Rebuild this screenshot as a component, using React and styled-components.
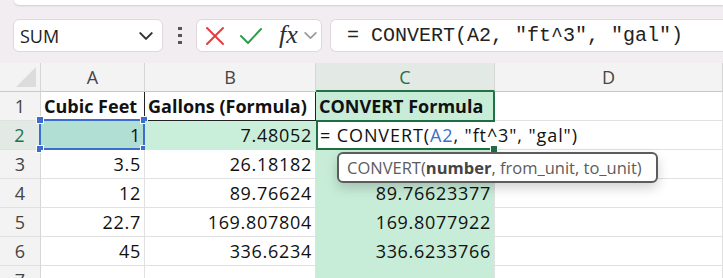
import React from "react";
import styled, { createGlobalStyle, css } from "styled-components";

const Global = createGlobalStyle`
  html, body { margin: 0; padding: 0; background: #f1edf0; }
  body { font-family: "Open Sans", "Noto Sans", sans-serif; }
`;

const Page = styled.div`
  position: relative;
  width: 723px;
  height: 278px;
  overflow: hidden;
  background: #f1edf0;
`;

const TopStrip = styled.div`
  height: 5px;
  margin-left: 14px;
  background: #ffffff;
  border-bottom-left-radius: 8px;
  box-shadow: 0 1px 2px rgba(0, 0, 0, 0.14);
`;

const FormulaBar = styled.div`
  display: flex;
  align-items: stretch;
  height: 33px;
  margin-top: 14px;
  padding-left: 13px;
`;

const NameBox = styled.div`
  width: 150px;
  box-sizing: border-box;
  display: flex;
  align-items: center;
  justify-content: space-between;
  padding: 0 8px 0 6px;
  background: #fff;
  border: 1px solid #dcd8dc;
  border-radius: 6px;
  font-size: 18px;
  color: #222;
`;

const Dots = styled.div`
  width: 4px;
  margin: 0 14px 0 15px;
  display: flex;
  flex-direction: column;
  justify-content: center;
  gap: 4px;
  span {
    display: block;
    width: 4px;
    height: 3px;
    background: #555;
  }
`;

const FxBox = styled.div`
  width: 126px;
  box-sizing: border-box;
  display: flex;
  align-items: center;
  padding-left: 8px;
  background: #fff;
  border: 1px solid #dcd8dc;
  border-radius: 6px;
`;

const Fx = styled.span`
  font-family: "Liberation Serif", "DejaVu Serif", serif;
  font-style: italic;
  font-size: 26px;
  color: #2f2f2f;
  margin: 0 5px 0 16px;
  line-height: 1;
  position: relative;
  top: -1px;
`;

const FormulaInput = styled.div`
  flex: 1;
  margin-left: 8px;
  box-sizing: border-box;
  display: flex;
  align-items: center;
  padding-left: 16px;
  background: #fff;
  border: 1px solid #dcd8dc;
  border-right: none;
  border-radius: 6px 0 0 6px;
  font-family: "Liberation Mono", "DejaVu Sans Mono", monospace;
  font-size: 20px;
  color: #222;
  white-space: nowrap;
`;

const Sheet = styled.div`
  margin-top: 11px;
  display: grid;
  grid-template-columns: 41px 104px 171px 179px 1fr;
  grid-auto-rows: 29px;
  background: #fff;
  font-size: 18px;
  color: #111;
`;

const cellBase = css`
  box-sizing: border-box;
  display: flex;
  align-items: center;
  white-space: nowrap;
  border-right: 1px solid #e1e1e1;
  border-bottom: 1px solid #e1e1e1;
`;

const Corner = styled.div`
  ${cellBase};
  position: relative;
  background: #f3f3f3;
  border-right-color: #d6d6d6;
  border-bottom-color: #c9c9c9;
  &::after {
    content: "";
    position: absolute;
    right: 4px;
    bottom: 4px;
    width: 20px;
    height: 20px;
    background: #dcdcdc;
    clip-path: polygon(100% 0, 100% 100%, 0 100%);
  }
`;

const ColHead = styled.div`
  ${cellBase};
  justify-content: center;
  background: ${(p) => (p.$active ? "#e3e9e5" : "#f3f3f3")};
  color: ${(p) => (p.$active ? "#217346" : "#444")};
  border-right-color: #d6d6d6;
  border-bottom: ${(p) => (p.$active ? "2px solid #217346" : "1px solid #c9c9c9")};
  padding-top: ${(p) => (p.$active ? "1px" : "0")};
`;

const RowHead = styled.div`
  ${cellBase};
  justify-content: center;
  background: ${(p) => (p.$active ? "#e3e9e5" : "#f3f3f3")};
  color: ${(p) => (p.$active ? "#217346" : "#444")};
  border-right: ${(p) => (p.$active ? "2px solid #217346" : "1px solid #d6d6d6")};
  border-bottom-color: #e1e1e1;
`;

const Cell = styled.div`
  ${cellBase};
  position: relative;
  padding: 0 3px;
  justify-content: ${(p) => (p.$right ? "flex-end" : "flex-start")};
  font-weight: ${(p) => (p.$bold ? 700 : 400)};
  letter-spacing: ${(p) => (p.$num ? "0.7px" : "0")};
  background: ${(p) => p.$bg || "#fff"};
  ${(p) => p.$bg && css`border-bottom-color: ${p.$bg};`}
  ${(p) => p.$bg && !p.$rightLine && css`border-right-color: ${p.$bg};`}
  ${(p) => p.$rightLine && css`border-right: 1px solid ${p.$rightLine};`}
  ${(p) => p.$bottomLine && css`border-bottom: 1px solid ${p.$bottomLine};`}
  ${(p) => p.$greenEdge && css`border-right: 2px solid #217346; border-bottom: 1px solid #217346;`}
`;

const Selection = styled.div`
  position: absolute;
  left: -2px;
  top: -2px;
  right: -1px;
  bottom: -1px;
  border: 2px solid #3c6fcd;
  pointer-events: none;
`;

const Handle = styled.span`
  position: absolute;
  width: 6px;
  height: 6px;
  background: #3c6fcd;
  border: 1px solid #fff;
  ${(p) => (p.$top ? "top: -5px;" : "bottom: -5px;")}
  ${(p) => (p.$left ? "left: -5px;" : "right: -5px;")}
`;

const EditCell = styled.div`
  ${cellBase};
  position: relative;
  z-index: 2;
  overflow: visible;
  padding-left: 2px;
  background: #fff;
  border-left: 2px solid #1f6e43;
  border-top: 2px solid #1f6e43;
  border-bottom: 2px solid #1f6e43;
  border-right: none;
  margin-top: -1px;
  letter-spacing: 0.9px;
  color: #111;
`;

const Ref = styled.span`
  color: #3b6fcb;
`;

const FillHandle = styled.span`
  position: absolute;
  right: -3px;
  bottom: -5px;
  width: 6px;
  height: 6px;
  background: #1f6e43;
  border: 1px solid #fff;
`;

const Tooltip = styled.div`
  position: absolute;
  left: 337px;
  top: 152px;
  width: 321px;
  height: 31px;
  box-sizing: border-box;
  display: flex;
  align-items: center;
  padding-left: 8px;
  background: #fff;
  border: 2px solid #5c5c5c;
  border-radius: 6px;
  box-shadow: 0 5px 12px rgba(0, 0, 0, 0.18);
  font-size: 16.5px;
  color: #5c5c5c;
  white-space: nowrap;
  z-index: 5;
  b {
    font-weight: 700;
    color: #444;
  }
`;

const Chevron = ({ color = "#444", size = 14, width = 1.6 }) => (
  <svg width={size} height={size} viewBox="0 0 14 14">
    <polyline points="2,4.5 7,9.5 12,4.5" fill="none" stroke={color} strokeWidth={width} strokeLinecap="round" strokeLinejoin="round" />
  </svg>
);

const Cross = () => (
  <svg width="20" height="20" viewBox="0 0 20 20">
    <line x1="2" y1="2" x2="18" y2="18" stroke="#e8393d" strokeWidth="2" strokeLinecap="round" />
    <line x1="18" y1="2" x2="2" y2="18" stroke="#e8393d" strokeWidth="2" strokeLinecap="round" />
  </svg>
);

const Check = () => (
  <svg width="24" height="20" viewBox="0 0 24 20">
    <polyline points="2,10 9,17 22,3" fill="none" stroke="#2f9e4c" strokeWidth="2" strokeLinecap="round" strokeLinejoin="round" />
  </svg>
);

const IconGap = styled.span`
  display: inline-block;
  width: ${(p) => p.$w}px;
`;

const GREEN = "#c7edd8";
const GREEN_B2 = "#c9efdb";
const TEAL = "#b2dfd3";

const rows = [
  ["3.5", "26.18182", ""],
  ["12", "89.76624", "89.76623377"],
  ["22.7", "169.807804", "169.8077922"],
  ["45", "336.6234", "336.6233766"],
  ["", "", ""],
];

export default function App() {
  return (
    <Page>
      <Global />
      <TopStrip />
      <FormulaBar>
        <NameBox>
          <span>SUM</span>
          <Chevron color="#333" size={16} width={1.8} />
        </NameBox>
        <Dots>
          <span />
          <span />
          <span />
        </Dots>
        <FxBox>
          <Cross />
          <IconGap $w={14} />
          <Check />
          <Fx>fx</Fx>
          <Chevron color="#9a9a9a" size={15} />
        </FxBox>
        <FormulaInput>= CONVERT(A2, "ft^3", "gal")</FormulaInput>
      </FormulaBar>

      <Sheet>
        <Corner />
        <ColHead>A</ColHead>
        <ColHead>B</ColHead>
        <ColHead $active>C</ColHead>
        <ColHead>D</ColHead>

        <RowHead>1</RowHead>
        <Cell $bold $rightLine="#222">Cubic Feet</Cell>
        <Cell $bold $rightLine="#222" $bottomLine="#222">Gallons (Formula)</Cell>
        <Cell $bold $bg={GREEN} $greenEdge>CONVERT Formula</Cell>
        <Cell />

        <RowHead $active>2</RowHead>
        <Cell $right $num $bg={TEAL}>
          1
          <Selection>
            <Handle $top $left />
            <Handle $top />
            <Handle $left />
            <Handle />
          </Selection>
        </Cell>
        <Cell $right $num $bg={GREEN_B2}>7.48052</Cell>
        <EditCell>
          = CONVERT(<Ref>A2</Ref>, "ft^3", "gal")
          <FillHandle />
        </EditCell>
        <Cell />

        {rows.map((r, i) => (
          <React.Fragment key={i}>
            <RowHead>{i + 3}</RowHead>
            <Cell $right $num>{r[0]}</Cell>
            <Cell $right $num>{r[1]}</Cell>
            <Cell $right $num $bg={GREEN} $rightLine="#e1e1e1">{r[2]}</Cell>
            <Cell />
          </React.Fragment>
        ))}
      </Sheet>

      <Tooltip>
        CONVERT(<b>number</b>, from_unit, to_unit)
      </Tooltip>
    </Page>
  );
}
